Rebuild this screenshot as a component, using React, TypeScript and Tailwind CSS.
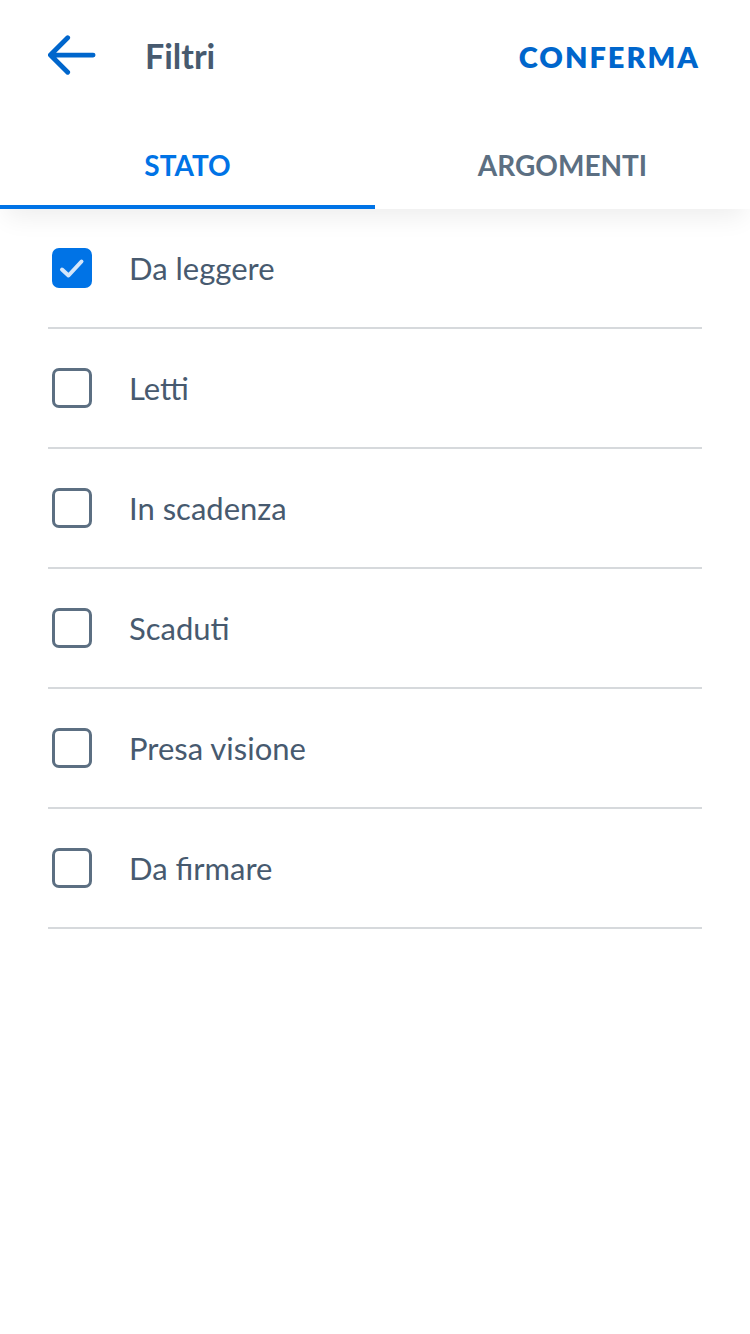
import { useState } from "react";

const voci = ["Da leggere", "Letti", "In scadenza", "Scaduti", "Presa visione", "Da firmare"];

function Casella({ attiva }: { attiva: boolean }) {
  if (attiva) {
    return (
      <div className="w-10 h-10 rounded-[7px] bg-[#0073e6] flex items-center justify-center shrink-0">
        <svg width="40" height="40" viewBox="0 0 40 40" fill="none">
          <path d="M10 21.5 L16.5 27.5 L29.5 13.5" stroke="#d4e6fa" strokeWidth="4" strokeLinecap="round" strokeLinejoin="round" />
        </svg>
      </div>
    );
  }
  return <div className="w-10 h-10 rounded-[7px] border-[3px] border-[#5c6f82] bg-white shrink-0" />;
}

export default function App() {
  const [scelte, setScelte] = useState<boolean[]>([true, false, false, false, false, false]);
  const [tab, setTab] = useState(0);

  return (
    <div className="min-h-screen bg-white" style={{ fontFamily: "Lato, 'Noto Sans', sans-serif" }}>
      <div className="relative z-10 bg-white shadow-[0_14px_24px_-6px_rgba(0,0,0,0.07)]">
        <header className="h-[112px] flex items-center pl-12 pr-[50px]">
          <button className="w-12 h-12 flex items-center justify-center">
            <svg width="50" height="44" viewBox="0 0 50 44" fill="none">
              <path d="M2.5 21 H47 M20.5 3 L2.5 21 L20.5 39" stroke="#0066cc" strokeWidth="5" strokeLinecap="round" strokeLinejoin="round" />
            </svg>
          </button>
          <h1 className="ml-[49px] text-[34px] font-bold text-[#475a6f] leading-none">Filtri</h1>
          <button className="ml-auto text-[29px] font-extrabold tracking-[2px] text-[#0066cc] leading-none">CONFERMA</button>
        </header>
        <nav className="flex h-[97px]">
          {["STATO", "ARGOMENTI"].map((t, i) => (
            <button
              key={t}
              onClick={() => setTab(i)}
              className={`flex-1 flex items-center justify-center text-[28px] font-bold leading-none pt-3 border-b-4 ${
                tab === i ? "text-[#0073e6] border-[#0073e6]" : "text-[#5c6f82] border-transparent"
              }`}
            >
              {t}
            </button>
          ))}
        </nav>
      </div>
      <ul className="mx-12">
        {voci.map((v, i) => (
          <li
            key={v}
            onClick={() => setScelte(scelte.map((s, j) => (j === i ? !s : s)))}
            className="h-[120px] flex items-center border-b-2 border-[#d6d9dc] pl-1 cursor-pointer"
          >
            <Casella attiva={scelte[i]} />
            <span className="ml-[37px] text-[31px] text-[#475a6f] leading-none">{v}</span>
          </li>
        ))}
      </ul>
    </div>
  );
}
